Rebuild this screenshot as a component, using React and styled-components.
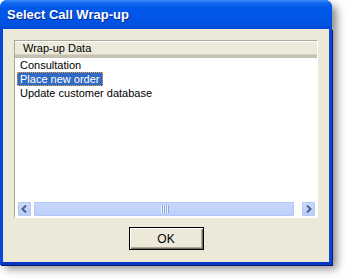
import React from 'react';
import styled, { createGlobalStyle } from 'styled-components';

const Global = createGlobalStyle`
	body {
		margin: 0;
		background: #ffffff;
		font-family: "Liberation Sans", Arial, sans-serif;
	}
`;

const Page = styled.div`
	width: 348px;
	height: 280px;
	padding: 0;
`;

const Window = styled.div`
	width: 332px;
	height: 264px;
	display: flex;
	flex-direction: column;
	border-radius: 7px 7px 0 0;
	box-shadow: 5px 5px 9px rgba(0, 0, 0, 0.45);
	background: #0a48dc;
	box-sizing: border-box;
`;

const TitleBar = styled.div`
	height: 29px;
	flex: none;
	display: flex;
	align-items: center;
	padding: 0 0 1px 7px;
	box-sizing: border-box;
	border-radius: 7px 7px 0 0;
	background: linear-gradient(
		to bottom,
		#3a8cfb 0px,
		#1168f0 3px,
		#0058ea 8px,
		#0055e6 18px,
		#0051df 25px,
		#0048d6 29px
	);
	color: #ffffff;
	font-weight: bold;
	font-size: 13px;
	text-shadow: 1px 1px 0 #0b2a8f;
`;

const Frame = styled.div`
	flex: 1;
	display: flex;
	border: 3px solid #0a46d8;
	border-top: none;
	border-bottom-color: #0536c4;
	box-shadow: 1px 1px 0 #0a1a70;
`;

const Client = styled.div`
	flex: 1;
	background: #ece9d8;
	padding: 11px 11px 12px 11px;
	display: flex;
	flex-direction: column;
	align-items: center;
	gap: 9px;
`;

const ListBox = styled.div`
	align-self: stretch;
	height: 178px;
	box-sizing: border-box;
	border-top: 1px solid #aca899;
	border-left: 1px solid #aca899;
	border-right: 1px solid #ffffff;
	border-bottom: 1px solid #ffffff;
	background: #ffffff;
	display: flex;
	flex-direction: column;
	font-size: 11px;
	color: #000000;
`;

const Header = styled.div`
	height: 17px;
	flex: none;
	box-sizing: border-box;
	background: #ebeadb;
	border-top: 1px solid #ffffff;
	border-bottom: 3px solid #c5c2b2;
	box-shadow: inset 0 -1px 0 #d6d3c4;
	padding-left: 8px;
	line-height: 13px;
`;

const Items = styled.div`
	flex: 1;
	padding: 0 0 0 2px;
`;

const Item = styled.div`
	display: inline-block;
	height: 14px;
	line-height: 14px;
	padding: 0 3px 0 3px;
	box-sizing: border-box;
	color: ${p => (p.$selected ? '#ffffff' : '#000000')};
	background: ${p => (p.$selected ? '#316ac5' : 'transparent')};
	outline: ${p => (p.$selected ? '1px dotted #e8a040' : 'none')};
	outline-offset: -1px;
`;

const Row = styled.div`
	height: 14px;
`;

const ScrollBar = styled.div`
	height: 16px;
	flex: none;
	margin: 0 1px 0 2px;
	display: flex;
	align-items: stretch;
	background: #fefefb;
	gap: 1px;
`;

const ArrowButton = styled.div`
	width: 15px;
	flex: none;
	box-sizing: border-box;
	border: 1px solid #ffffff;
	border-radius: 2px;
	background: linear-gradient(to bottom, #cbd9fc, #b9cbf9);
	box-shadow: inset 0 0 0 1px #b4c7f4;
	display: flex;
	align-items: center;
	justify-content: center;
`;

const Thumb = styled.div`
	flex: 1;
	margin-right: 5px;
	box-sizing: border-box;
	border: 1px solid #ffffff;
	border-radius: 2px;
	background: linear-gradient(to bottom, #c9d8fd, #bccefb);
	box-shadow: inset 0 0 0 1px #b2c6f6;
	display: flex;
	align-items: center;
	justify-content: center;
`;

const Grip = styled.div`
	display: flex;
	gap: 1px;
	height: 8px;
	span {
		width: 1px;
		background: #eef3ff;
		box-shadow: 1px 0 0 #8ca7e6;
	}
`;

const Button = styled.button`
	width: 75px;
	height: 23px;
	flex: none;
	box-sizing: border-box;
	border: 1px solid #000000;
	background: #ece9d8;
	box-shadow: inset 1px 1px 0 #ffffff, inset -1px -1px 0 #716f64,
		inset -2px -2px 0 #aca899;
	font-family: "Liberation Sans", Arial, sans-serif;
	font-size: 12px;
	color: #000000;
	padding: 0;
`;

const Chevron = ({ dir }) => (
	<svg width="7" height="8" viewBox="0 0 7 8">
		<path
			d={dir === 'left' ? 'M5 0.5 L1.5 4 L5 7.5' : 'M2 0.5 L5.5 4 L2 7.5'}
			fill="none"
			stroke="#4d6185"
			strokeWidth="2"
		/>
	</svg>
);

const items = ['Consultation', 'Place new order', 'Update customer database'];

export default function App() {
	return (
		<Page>
			<Global />
			<Window>
				<TitleBar>Select Call Wrap-up</TitleBar>
				<Frame>
					<Client>
						<ListBox>
							<Header>Wrap-up Data</Header>
							<Items>
								{items.map((item, i) => (
									<Row key={item}>
										<Item $selected={i === 1}>{item}</Item>
									</Row>
								))}
							</Items>
							<ScrollBar>
								<ArrowButton>
									<Chevron dir="left" />
								</ArrowButton>
								<Thumb>
									<Grip>
										<span />
										<span />
										<span />
										<span />
									</Grip>
								</Thumb>
								<ArrowButton>
									<Chevron dir="right" />
								</ArrowButton>
							</ScrollBar>
						</ListBox>
						<Button>OK</Button>
					</Client>
				</Frame>
			</Window>
		</Page>
	);
}
